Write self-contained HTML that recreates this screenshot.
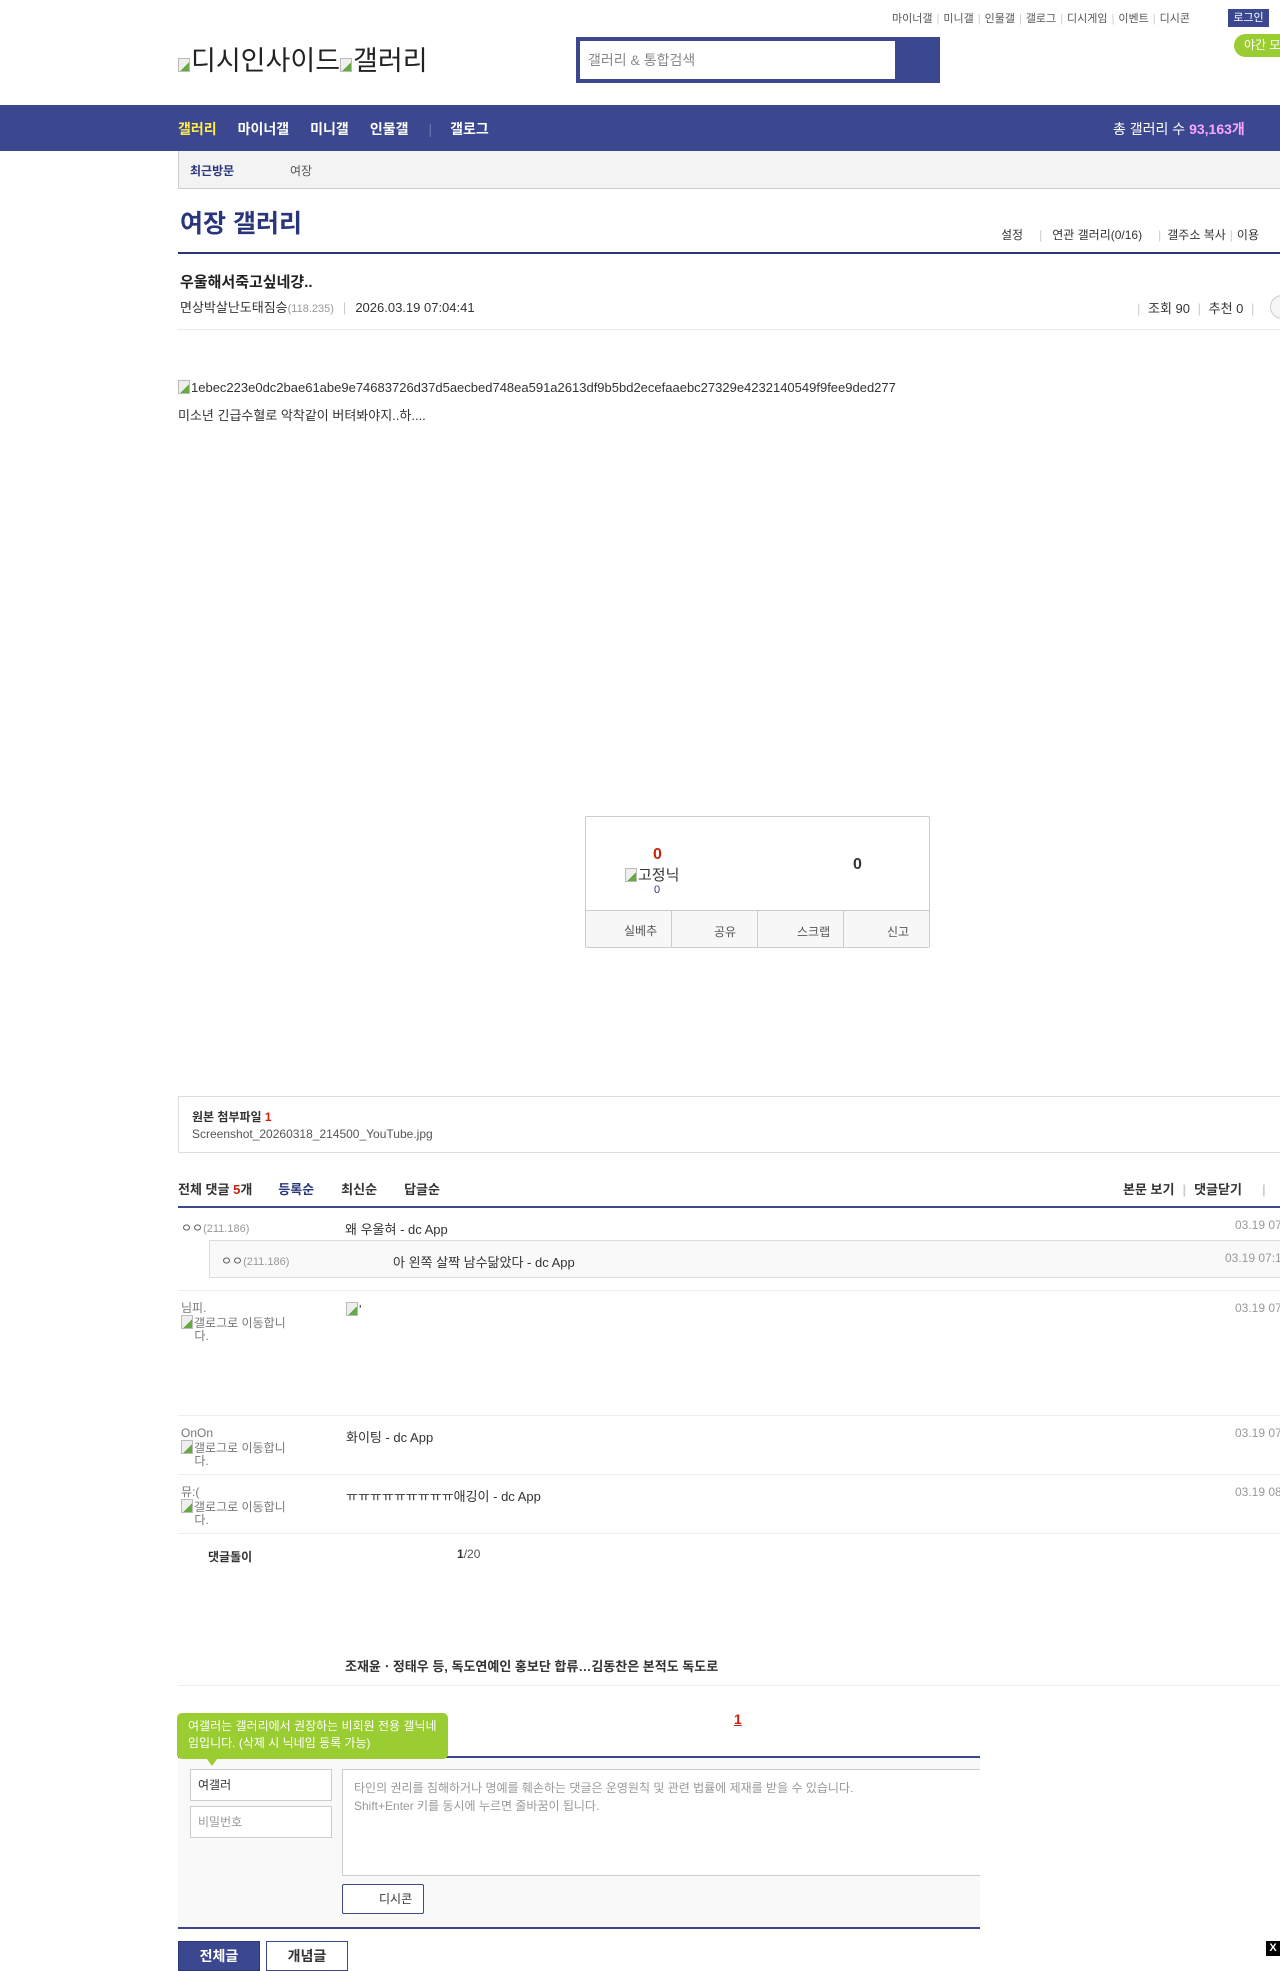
<!DOCTYPE html>
<html><head><meta charset="utf-8">
<style>
*{margin:0;padding:0;box-sizing:border-box}
body{width:1280px;height:1956px;overflow:hidden;position:relative;background:#fff;font-family:"Liberation Sans","Noto Sans CJK KR",sans-serif;color:#333;font-size:13px}
.a{position:absolute;white-space:nowrap}
.bi{display:inline-block;width:12px;height:14px;border:1px solid #bbb;background:linear-gradient(135deg,#eee 60%,#6a4 60%);vertical-align:-2px;margin-right:1px}
.sep{color:#ccc;margin:0 4px}
</style></head><body>
<div class="a" style="left:892px;top:10px;font-size:11px;color:#555">마이너갤<span class="sep">|</span>미니갤<span class="sep">|</span>인물갤<span class="sep">|</span>갤로그<span class="sep">|</span>디시게임<span class="sep">|</span>이벤트<span class="sep">|</span>디시콘</div>
<div class="a" style="left:1228px;top:9px;width:41px;height:18px;background:#3b4890;color:#fff;font-size:11px;text-align:center;line-height:18px">로그인</div>
<div class="a" style="left:1234px;top:34px;width:60px;height:23px;background:#9acd32;border-radius:12px;color:#fff;font-size:12px;line-height:23px;padding-left:10px">야간 모드</div>
<div class="a" style="left:178px;top:39px;font-size:27px;color:#222"><span class="bi"></span>디시인사이드<span class="bi"></span>갤러리</div>
<div class="a" style="left:576px;top:37px;width:364px;height:46px;background:#3b4890"></div>
<div class="a" style="left:580px;top:41px;width:315px;height:38px;background:#fff;color:#888;font-size:14px;line-height:38px;padding-left:8px">갤러리 &amp; 통합검색</div>
<div class="a" style="left:0;top:105px;width:1280px;height:46px;background:#3b4890"></div>
<div class="a" style="left:178px;top:119px;font-size:14px;font-weight:bold;color:#fff"><span style="color:#ffed4a">갤러리</span><span style="margin-left:21px">마이너갤</span><span style="margin-left:21px">미니갤</span><span style="margin-left:21px">인물갤</span><span style="margin-left:20px;color:#6a76b0;font-weight:normal">|</span><span style="margin-left:18px">갤로그</span></div>
<div class="a" style="left:1113px;top:119px;font-size:14px;color:#fff">총 갤러리 수 <b style="color:#f9a6ff">93,163개</b></div>
<div class="a" style="left:178px;top:151px;width:1102px;height:38px;background:#f3f3f3;border-left:1px solid #ccc;border-bottom:1px solid #ccc"></div>
<div class="a" style="left:190px;top:162px;font-size:12px;font-weight:bold;color:#29367c">최근방문</div>
<div class="a" style="left:290px;top:162px;font-size:12px;color:#555">여장</div>
<div class="a" style="left:180px;top:204px;font-size:25px;font-weight:bold;color:#29367c">여장 갤러리</div>
<div class="a" style="left:1001px;top:226px;font-size:12px;color:#333">설정<span class="sep" style="margin:0 10px 0 16px">|</span>연관 갤러리(0/16)<span class="sep" style="margin:0 6px 0 16px">|</span>갤주소 복사<span class="sep">|</span>이용</div>
<div class="a" style="left:178px;top:252px;width:1102px;height:2px;background:#29367c"></div>
<div class="a" style="left:180px;top:271px;font-size:15px;font-weight:bold;color:#222">우울해서죽고싶네걍..</div>
<div class="a" style="left:180px;top:297px;font-size:13px;color:#333">면상박살난도태짐승<span style="color:#999;font-size:11px">(118.235)</span><span class="sep" style="margin:0 9px">|</span>2026.03.19 07:04:41</div>
<div class="a" style="left:1133px;top:298px;font-size:13px;color:#333"><span class="sep">|</span> 조회 90 <span class="sep">|</span> 추천 0 <span class="sep">|</span></div>
<div class="a" style="left:1270px;top:295px;width:24px;height:24px;border:1px solid #ccc;border-radius:12px;background:#f6f6f6"></div>
<div class="a" style="left:178px;top:329px;width:1102px;height:1px;background:#e8e8e8"></div>
<div class="a" style="left:178px;top:380px;font-size:13px;color:#333"><span class="bi"></span>1ebec223e0dc2bae61abe9e74683726d37d5aecbed748ea591a2613df9b5bd2ecefaaebc27329e4232140549f9fee9ded277</div>
<div class="a" style="left:178px;top:405px;font-size:13px;color:#333">미소년 긴급수혈로 악착같이 버텨봐야지..하....</div>
<div class="a" style="left:585px;top:816px;width:345px;height:132px;border:1px solid #ccc;border-radius:2px"></div>
<div class="a" style="left:653px;top:846px;font-size:16px;font-weight:bold;color:#c8240c">0</div>
<div class="a" style="left:625px;top:864px;font-size:15px;color:#333"><span class="bi"></span>고정닉</div>
<div class="a" style="left:654px;top:884px;font-size:11px;color:#29367c">0</div>
<div class="a" style="left:853px;top:856px;font-size:16px;font-weight:bold;color:#333">0</div>
<div class="a" style="left:586px;top:910px;width:343px;height:37px;background:#f7f7f7;border-top:1px solid #ccc"></div>
<div class="a" style="left:671px;top:910px;width:1px;height:37px;background:#ccc"></div>
<div class="a" style="left:757px;top:910px;width:1px;height:37px;background:#ccc"></div>
<div class="a" style="left:843px;top:910px;width:1px;height:37px;background:#ccc"></div>
<div class="a" style="left:624px;top:922px;font-size:12px;color:#555">실베추</div>
<div class="a" style="left:714px;top:923px;font-size:12px;color:#555">공유</div>
<div class="a" style="left:797px;top:923px;font-size:12px;color:#555">스크랩</div>
<div class="a" style="left:887px;top:923px;font-size:12px;color:#555">신고</div>
<div class="a" style="left:178px;top:1096px;width:1110px;height:57px;border:1px solid #ddd"></div>
<div class="a" style="left:192px;top:1108px;font-size:12px;font-weight:bold;color:#333">원본 첨부파일 <span style="color:#c8240c">1</span></div>
<div class="a" style="left:192px;top:1127px;font-size:12px;color:#555">Screenshot_20260318_214500_YouTube.jpg</div>
<div class="a" style="left:178px;top:1179px;font-size:13px;font-weight:bold;color:#333">전체 댓글 <span style="color:#c8240c">5</span>개<span style="margin-left:26px;color:#29367c">등록순</span><span style="margin-left:27px">최신순</span><span style="margin-left:27px">답글순</span></div>
<div class="a" style="left:1123px;top:1179px;font-size:13px;font-weight:bold;color:#333">본문 보기<span class="sep" style="margin:0 8px">|</span>댓글닫기<span class="sep" style="margin-left:20px">|</span></div>
<div class="a" style="left:178px;top:1206px;width:1102px;height:2px;background:#3b4890"></div>
<div class="a" style="left:181px;top:1219px;font-size:12px;color:#555">ㅇㅇ<span style="color:#999;font-size:11px">(211.186)</span></div>
<div class="a" style="left:345px;top:1219px;font-size:13px;color:#333">왜 우울혀 - dc App</div>
<div class="a" style="left:1235px;top:1218px;font-size:12px;color:#999">03.19 07:</div>
<div class="a" style="left:209px;top:1240px;width:1080px;height:38px;background:#f9f9f9;border:1px solid #ddd"></div>
<div class="a" style="left:221px;top:1252px;font-size:12px;color:#555">ㅇㅇ<span style="color:#999;font-size:11px">(211.186)</span></div>
<div class="a" style="left:393px;top:1252px;font-size:13px;color:#333">아 왼쪽 살짝 남수닮았다 - dc App</div>
<div class="a" style="left:1225px;top:1251px;font-size:12px;color:#999">03.19 07:1</div>
<div class="a" style="left:178px;top:1290px;width:1102px;height:1px;background:#eee"></div>
<div class="a" style="left:181px;top:1302px;font-size:12px;color:#777;line-height:13px;white-space:normal;width:130px">님피.<br><span class="bi"></span>갤로그로 이동합니<br>&nbsp;&nbsp;&nbsp;&nbsp;다.</div>
<div class="a" style="left:346px;top:1302px"><span class="bi"></span>'</div>
<div class="a" style="left:1235px;top:1301px;font-size:12px;color:#999">03.19 07:</div>
<div class="a" style="left:178px;top:1415px;width:1102px;height:1px;background:#eee"></div>
<div class="a" style="left:181px;top:1427px;font-size:12px;color:#777;line-height:13px;white-space:normal;width:130px">OnOn<br><span class="bi"></span>갤로그로 이동합니<br>&nbsp;&nbsp;&nbsp;&nbsp;다.</div>
<div class="a" style="left:346px;top:1427px;font-size:13px;color:#333">화이팅 - dc App</div>
<div class="a" style="left:1235px;top:1426px;font-size:12px;color:#999">03.19 07:</div>
<div class="a" style="left:178px;top:1474px;width:1102px;height:1px;background:#eee"></div>
<div class="a" style="left:181px;top:1486px;font-size:12px;color:#777;line-height:13px;white-space:normal;width:130px">뮤:(<br><span class="bi"></span>갤로그로 이동합니<br>&nbsp;&nbsp;&nbsp;&nbsp;다.</div>
<div class="a" style="left:346px;top:1486px;font-size:13px;color:#333">ㅠㅠㅠㅠㅠㅠㅠㅠㅠ애깅이 - dc App</div>
<div class="a" style="left:1235px;top:1485px;font-size:12px;color:#999">03.19 08:</div>
<div class="a" style="left:178px;top:1533px;width:1102px;height:1px;background:#eee"></div>
<div class="a" style="left:208px;top:1548px;font-size:12px;font-weight:bold;color:#333">댓글돌이</div>
<div class="a" style="left:457px;top:1547px;font-size:12px;color:#555"><b style="color:#333">1</b>/20</div>
<div class="a" style="left:345px;top:1656px;font-size:13px;font-weight:bold;color:#333">조재윤ㆍ정태우 등, 독도연예인 홍보단 합류…김동찬은 본적도 독도로</div>
<div class="a" style="left:178px;top:1685px;width:1102px;height:1px;background:#eee"></div>
<div class="a" style="left:734px;top:1711px;font-size:14px;font-weight:bold;color:#c8240c;text-decoration:underline">1</div>
<div class="a" style="left:178px;top:1756px;width:802px;height:173px;background:#f9f9f9;border-top:2px solid #3b4890;border-bottom:2px solid #3b4890"></div>
<div class="a" style="left:177px;top:1713px;width:271px;height:46px;background:#9acd32;border-radius:5px;color:#fff;font-size:12px;line-height:17px;padding:5px 11px;white-space:normal">여갤러는 갤러리에서 권장하는 비회원 전용 갤닉네임입니다. (삭제 시 닉네임 등록 가능)</div>
<div class="a" style="left:207px;top:1759px;width:0;height:0;border-left:5px solid transparent;border-right:5px solid transparent;border-top:7px solid #9acd32"></div>
<div class="a" style="left:190px;top:1769px;width:142px;height:32px;background:#fff;border:1px solid #ccc;font-size:12px;color:#333;line-height:30px;padding-left:7px">여갤러</div>
<div class="a" style="left:190px;top:1806px;width:142px;height:32px;background:#fff;border:1px solid #ccc;font-size:12px;color:#999;line-height:30px;padding-left:7px">비밀번호</div>
<div class="a" style="left:342px;top:1769px;width:638px;height:107px;background:#fff;border:1px solid #ccc;border-right:none;font-size:12px;color:#999;line-height:18px;padding:9px 11px;white-space:normal">타인의 권리를 침해하거나 명예를 훼손하는 댓글은 운영원칙 및 관련 법률에 제재를 받을 수 있습니다.<br>Shift+Enter 키를 동시에 누르면 줄바꿈이 됩니다.</div>
<div class="a" style="left:342px;top:1884px;width:82px;height:30px;background:#fff;border:1px solid #3b4890;border-radius:2px;font-size:12px;color:#333;line-height:28px;padding-left:36px">디시콘</div>
<div class="a" style="left:178px;top:1941px;width:82px;height:30px;background:#3b4890;border:1px solid #29367c;color:#fff;font-weight:bold;font-size:14px;text-align:center;line-height:28px">전체글</div>
<div class="a" style="left:266px;top:1941px;width:82px;height:30px;background:#fff;border:1px solid #3b4890;color:#333;font-weight:bold;font-size:14px;text-align:center;line-height:28px">개념글</div>
<div class="a" style="left:1266px;top:1941px;width:14px;height:15px;background:#000;color:#fff;font-size:11px;font-weight:bold;text-align:center;line-height:15px">X</div>
</body></html>
